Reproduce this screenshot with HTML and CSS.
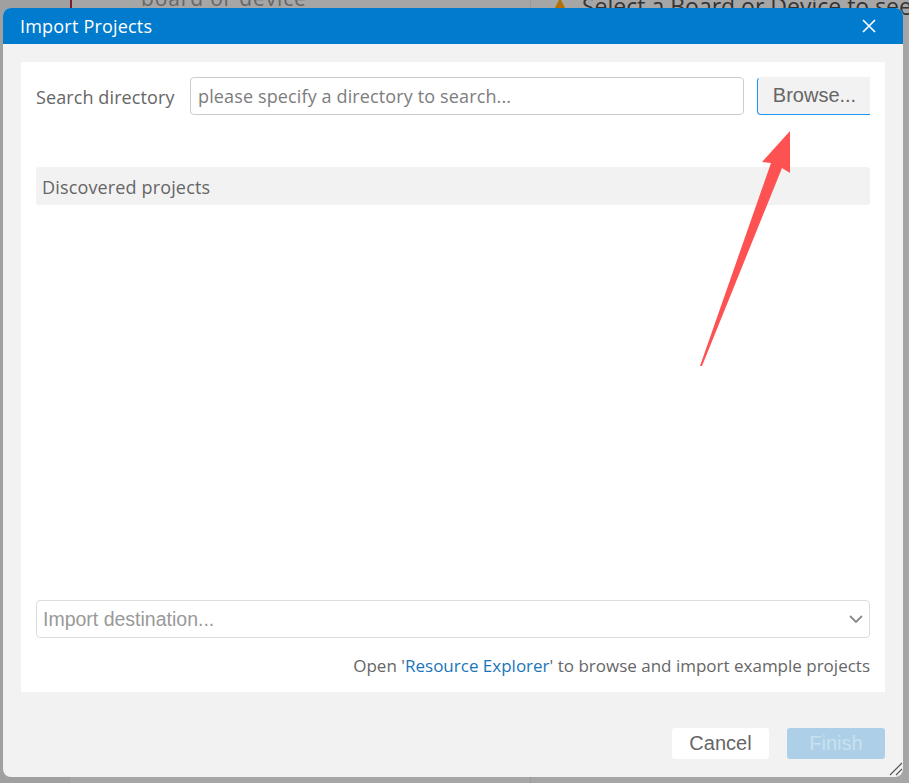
FILE: index.html
```html
<!DOCTYPE html>
<html lang="en">
<head>
<meta charset="utf-8">
<title>Import Projects</title>
<link rel="stylesheet" href="styles.css">
</head>
<body>
<div class="backdrop">
  <div class="bd-rail"></div>
  <div class="bd-left"><span class="bd-left-text">board or device</span></div>
  <div class="bd-right">
    <svg class="bd-warn" width="18" height="18" viewBox="0 0 18 18"><path d="M9 0 L18 18 H0 Z" fill="#b56f06"/></svg>
    <span class="bd-right-text">Select a Board or Device to see</span>
  </div>
</div>
<section class="dialog">
  <header class="titlebar">
    <h1 class="title">Import Projects</h1>
    <svg class="close" width="14" height="14" viewBox="0 0 14 14"><path d="M1 1 L13 13 M13 1 L1 13" stroke="#fff" stroke-width="1.7" fill="none"/></svg>
  </header>
  <div class="content">
    <div class="search-row">
      <label class="search-label">Search directory</label>
      <div class="search-input">please specify a directory to search...</div>
      <button class="browse">Browse...</button>
    </div>
    <div class="discovered">Discovered projects</div>
    <div class="projects"></div>
    <div class="destination">
      <span>Import destination...</span>
      <svg width="14" height="8" viewBox="0 0 14 8"><path d="M1 1 L7 7 L13 1" stroke="#8a8a8a" stroke-width="1.8" fill="none"/></svg>
    </div>
    <p class="hint">Open '<a class="hint-link">Resource Explorer</a>' to browse and import example projects</p>
  </div>
  <footer class="actions">
    <button class="btn btn-cancel">Cancel</button>
    <button class="btn btn-finish">Finish</button>
  </footer>
  <svg class="grip" width="14" height="14" viewBox="0 0 14 14"><path d="M1 13 L13 1 M7 13 L13 7" stroke="#555" stroke-width="1.1" fill="none"/></svg>
</section>
<svg class="arrow" width="100" height="240" viewBox="0 0 100 240"><path d="M91 1 L91 43 L83 38 L3 236 L1 236 L72 33 L63 32 Z" fill="#fd5152"/></svg>
</body>
</html>
```

FILE: styles.css
```css
* { box-sizing: border-box; }
html, body { margin: 0; height: 100%; }
body {
  width: 909px;
  height: 783px;
  overflow: hidden;
  position: relative;
  background: #a6a6a6;
  font-family: "Open Sans", "Noto Sans", sans-serif;
  color: #666;
}
.backdrop { display: flex; height: 783px; }
.bd-rail { width: 70px; background: #a0a0a0; }
.bd-left {
  width: 461px;
  background: linear-gradient(#7c1f24, #7c1f24) 0 0 / 2px 10px no-repeat #a6a6a6;
  border-right: 1px solid #999;
  padding-left: 71px;
  overflow: hidden;
}
.bd-left-text {
  display: block;
  margin-top: -14px;
  font-size: 21px;
  line-height: 24px;
  letter-spacing: 0.85px;
  color: #666;
}
.bd-right {
  flex: 1;
  display: flex;
  align-items: flex-start;
  gap: 13px;
  padding-left: 20px;
  overflow: hidden;
  white-space: nowrap;
}
.bd-warn { margin-top: -2px; flex: none; }
.bd-right-text {
  margin-top: -8px;
  font-size: 23px;
  line-height: 28px;
  color: #333;
}
.dialog {
  position: absolute;
  left: 3px;
  top: 8px;
  width: 900px;
  height: 769px;
  background: #f2f2f2;
  border-radius: 8px;
  overflow: hidden;
  display: flex;
  flex-direction: column;
}
.titlebar {
  height: 36px;
  flex: none;
  background: #007bce;
  display: flex;
  align-items: center;
  justify-content: space-between;
  padding: 0 27px 0 17px;
}
.title {
  margin: 0;
  font-size: 18px;
  font-weight: 400;
  letter-spacing: 0.2px;
  color: #fff;
}
.content {
  margin: 18px 18px 0;
  height: 630px;
  background: #fff;
  padding: 15px 15px 0;
  display: flex;
  flex-direction: column;
}
.search-row { display: flex; align-items: flex-start; height: 90px; flex: none; }
.search-label {
  width: 154px;
  flex: none;
  font-size: 18px;
  line-height: 40px;
  letter-spacing: 0.1px;
  color: #666;
}
.search-input {
  width: 554px;
  height: 38px;
  flex: none;
  border: 1px solid #ccc;
  border-radius: 4px;
  padding: 0 7px;
  font-size: 18px;
  line-height: 36px;
  letter-spacing: 0.13px;
  color: #7d7d7d;
  white-space: nowrap;
}
.browse {
  margin-left: 13px;
  width: 113px;
  height: 38px;
  flex: none;
  padding: 0 0 2px 1px;
  background: #f2f2f2;
  border: 1px solid #2196f3;
  border-top-color: #f2f2f2;
  border-right: 0;
  border-radius: 4px 0 0 4px;
  font-family: "Liberation Sans", Arial, sans-serif;
  font-size: 20px;
  color: #666;
}
.discovered {
  height: 38px;
  flex: none;
  background: #f2f2f2;
  border-radius: 3px;
  padding-left: 6px;
  font-size: 18px;
  line-height: 40px;
  letter-spacing: 0.15px;
  color: #666;
}
.projects { height: 395px; flex: none; }
.destination {
  height: 38px;
  flex: none;
  border: 1px solid #ddd;
  border-radius: 4px;
  padding: 0 6px 0 6px;
  display: flex;
  align-items: center;
  justify-content: space-between;
  font-family: "Liberation Sans", Arial, sans-serif;
  font-size: 19.5px;
  color: #999;
}
.hint {
  margin: 16px 0 0;
  font-size: 17px;
  line-height: 24px;
  text-align: right;
  color: #666;
}
.hint-link { color: #1b75ba; }
.actions {
  flex: 1;
  display: flex;
  justify-content: flex-end;
  align-items: flex-start;
  gap: 18px;
  padding: 36px 18px 0 0;
}
.btn {
  height: 31px;
  width: 97px;
  padding: 0;
  border: 0;
  border-radius: 3px;
  font-family: "Liberation Sans", Arial, sans-serif;
  font-size: 20px;
}
.btn-cancel { background: #fff; color: #666; }
.btn-finish { width: 98px; background: #add0e8; color: #c9e0f0; }
.grip { position: absolute; right: 0; bottom: 1px; }
.arrow { position: absolute; left: 699px; top: 130px; }
```
